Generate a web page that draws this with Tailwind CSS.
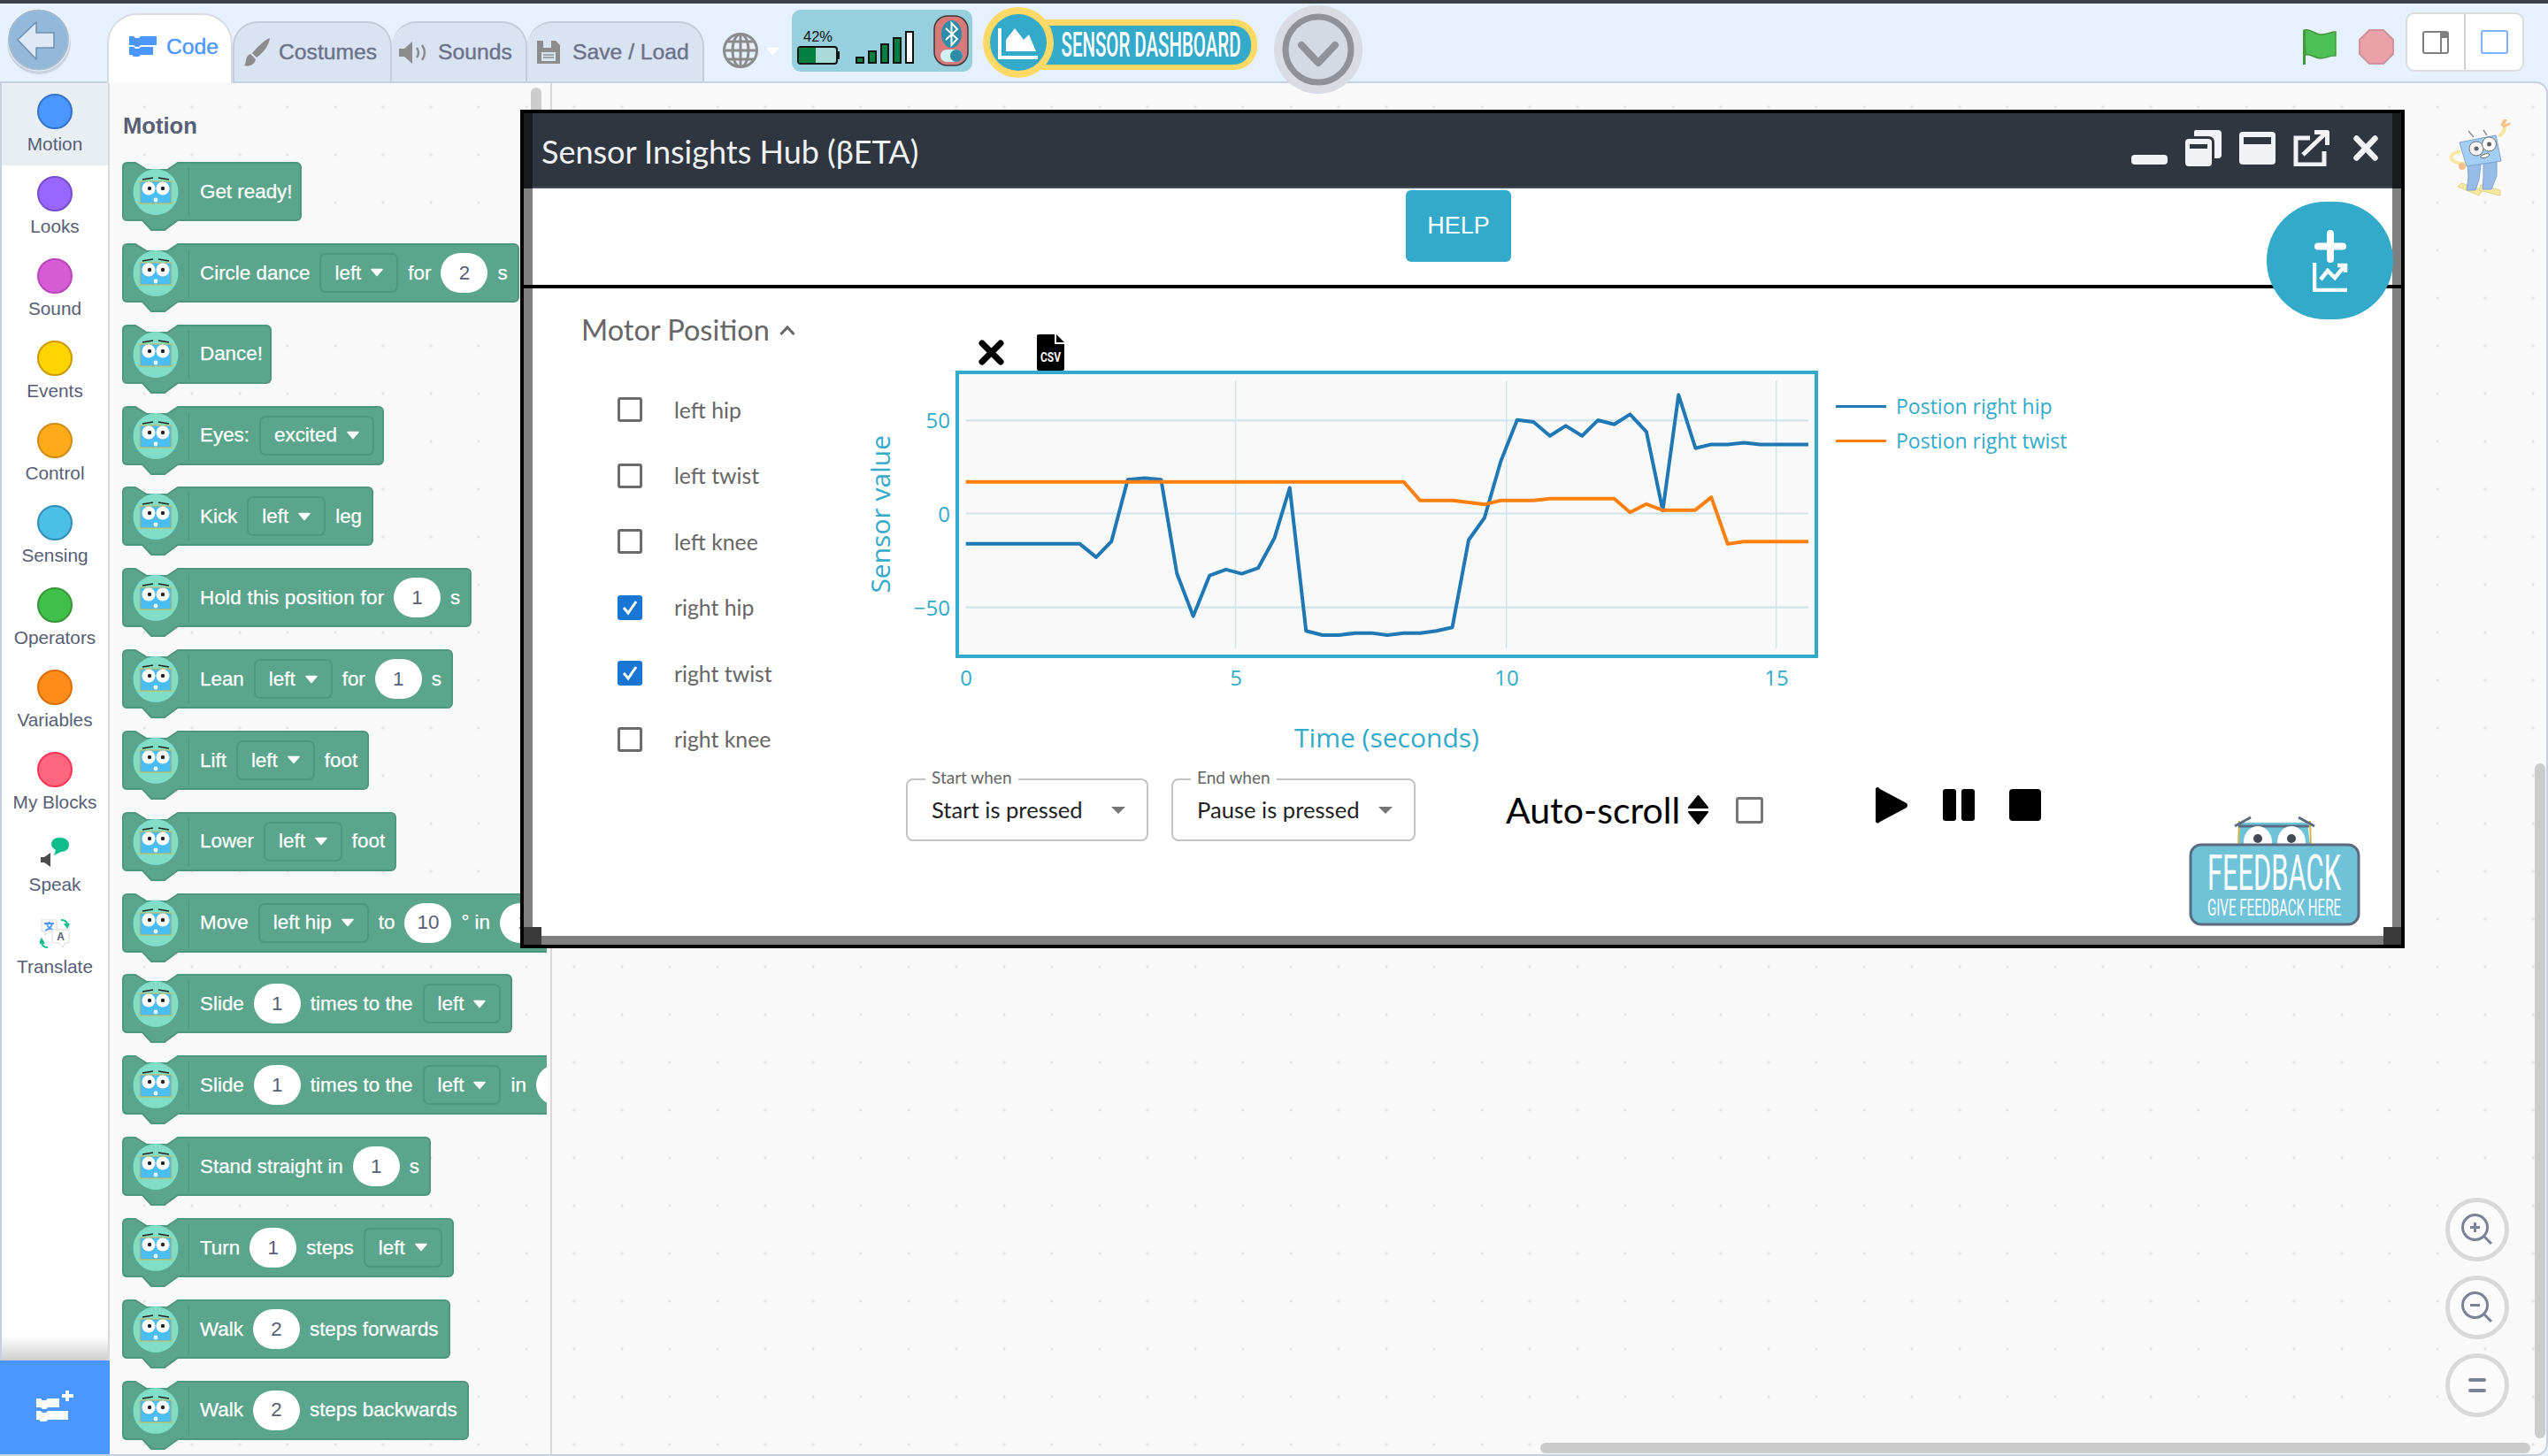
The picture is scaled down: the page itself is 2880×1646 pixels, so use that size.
<!DOCTYPE html>
<html lang="en">
<head>
<meta charset="UTF-8">
<title>Sensor Insights Hub</title>
<script src="https://cdn.jsdelivr.net/npm/@tailwindcss/browser@4"></script>
</head>
<body class="bg-[#e6f0ff]">
<!-- shared block head: notch, bump and robot face -->
<svg class="hidden">
  <symbol id="block-head" viewBox="0 0 76 78">
    <path d="M76 1H63L51 9H28L15 1H6Q1 1 1 6V61Q1 66 6 66H23L33 77H48L63 66H76" fill="#5ba58c" stroke="#4e9680" stroke-width="2"/>
    <path d="M75.5 7V62" stroke="#4f9580" stroke-width="1.5"/>
    <ellipse cx="38" cy="34" rx="25.5" ry="26" fill="#7fdec5"/>
    <rect x="20" y="22" width="36" height="25" fill="#4cbdf0" stroke="#d9b84a" stroke-width="1"/>
    <circle cx="30" cy="30" r="7.5" fill="#fff"/>
    <circle cx="46" cy="30" r="7.5" fill="#fff"/>
    <circle cx="31" cy="30" r="2.2" fill="#222"/>
    <circle cx="46" cy="30" r="2.2" fill="#222"/>
    <path d="M23 20L35 18M41 18L53 20" stroke="#222" stroke-width="1.6"/>
    <circle cx="38" cy="43" r="2.4" fill="#fff"/>
  </symbol>
  <symbol id="caret" viewBox="0 0 14 10"><path d="M1 1.5H13L7 8.5Z" fill="#fff" stroke="#fff" stroke-linejoin="round" stroke-width="1.5"/></symbol>
</svg>

<div class="relative w-[2880px] h-[1646px] overflow-hidden flex flex-col bg-[#e6f0ff] font-['Liberation_Sans',Arial,sans-serif]">
  <div class="h-[4px] bg-[#3d4147] shrink-0"></div>

  <!-- top menu -->
  <header class="relative z-20 flex h-[88px] shrink-0">
    <svg class="ml-[8px] mt-[5px] w-[73px] h-[76px] shrink-0" viewBox="0 0 73 76">
      <circle cx="36" cy="39" r="36" fill="#c9d2de"/>
      <circle cx="35.500" cy="36" r="35.500" fill="#fff" fill-opacity=".7"/>
      <circle cx="35.500" cy="36" r="33.500" fill="#93b8da" stroke="#a4bcd2" stroke-width="2"/>
      <path d="M12 36L33 16V28H53V45H33V58Z" fill="#dfe9f6" stroke="#6d8fb0" stroke-width="1.500" stroke-linejoin="round"/>
    </svg>

    <nav class="ml-[40px] flex items-end self-end text-[24.7px] [-webkit-text-stroke:0.4px] whitespace-nowrap text-[#6b7288]">
      <div class="relative z-10 -mb-[2px] flex items-center gap-[11px] w-[142px] h-[79px] pl-[23px] pb-[6px] bg-white text-[#4c97ff] border-x-2 border-t-2 border-[#d9dbe0] rounded-t-[34px]">
        <svg class="w-[31px] h-[23px] shrink-0" viewBox="0 0 31 23" fill="#4c97ff"><path d="M0 0H5L7 2H11L13 0H31V10H13L11 12H7L5 10H0Z"/><path d="M0 12H5L7 14H11L13 12H27V21H13L11 23H5L3 21H0Z"/></svg>
        <span>Code</span>
      </div>
      <div class="flex items-center gap-[10px] w-[180px] h-[68px] pl-[10px] bg-[#d9e3f2] border-x-2 border-t-2 border-[#c4ccda] rounded-t-[28px]">
        <svg class="w-[30px] h-[32px] shrink-0" viewBox="0 0 30 32" fill="#8c8c8c"><path d="M30 0C29 9 22 17 15 22L10 17C15 11 23 3 30 0Z"/><path d="M8 18L14 24C13 30 6 33 1 31C4 29 1 21 8 18Z"/></svg>
        <span>Costumes</span>
      </div>
      <div class="flex items-center gap-[12px] w-[153px] h-[68px] pl-[8px] bg-[#d9e3f2] border-r-2 border-t-2 border-[#c4ccda] rounded-t-[28px]">
        <svg class="w-[32px] h-[25px] shrink-0" viewBox="0 0 32 25" fill="#8c8c8c"><path d="M0 8H6L15 0V25L6 17H0Z"/><path d="M20 7Q24 12.500 20 18M26 4Q32 12.500 26 21" fill="none" stroke="#8c8c8c" stroke-width="2.500"/></svg>
        <span>Sounds</span>
      </div>
      <div class="flex items-center gap-[14px] w-[200px] h-[68px] pl-[11px] bg-[#d9e3f2] border-r-2 border-t-2 border-[#c4ccda] rounded-t-[28px]">
        <svg class="w-[26px] h-[26px] shrink-0" viewBox="0 0 26 26"><path d="M0 0H21L26 5V26H0Z" fill="#8c8c8c"/><rect x="7" y="0" width="9" height="8" fill="#d9e3f2"/><rect x="5" y="13" width="16" height="10" fill="#d9e3f2"/><path d="M7 16H19M7 19H19" stroke="#8c8c8c" stroke-width="1.500"/></svg>
        <span>Save / Load</span>
      </div>
    </nav>

    <svg class="ml-[21px] mt-[33px] w-[40px] h-[40px] shrink-0" viewBox="0 0 40 40" fill="none" stroke="#8c8c8c" stroke-width="3"><circle cx="20" cy="20" r="18.500"/><ellipse cx="20" cy="20" rx="9" ry="18.500"/><path d="M20 1V39M2 20H38M5 10H35M5 30H35"/></svg>
    <svg class="ml-[8px] mt-[49px] w-[17px] h-[10px] shrink-0"><use href="#caret"/></svg>

    <!-- robot status -->
    <svg class="ml-[13px] mt-[7px] w-[204px] h-[70px] shrink-0" viewBox="0 0 204 70">
      <rect width="204" height="70" rx="10" fill="#96cfdd"/>
      <text x="13" y="35.500" textLength="33" lengthAdjust="spacingAndGlyphs" font-size="17" fill="#111" font-family="Liberation Sans">42%</text>
      <rect x="7" y="42" width="44" height="19" rx="3" fill="#a9dbd8" stroke="#111" stroke-width="2"/>
      <rect x="8" y="43" width="19" height="17" fill="#008040"/>
      <rect x="51" y="47" width="3" height="9" fill="#111"/>
      <g stroke="#111" stroke-width="2" fill="#008040">
        <rect x="73" y="54" width="8" height="6"/><rect x="87" y="47" width="8" height="13"/><rect x="101" y="39" width="8" height="21"/><rect x="115" y="32" width="8" height="28"/><rect x="129" y="25" width="8" height="35" fill="#fff"/>
      </g>
      <rect x="161" y="7" width="38" height="56" rx="15" fill="#d97a7a" stroke="#3a3a3a" stroke-width="1.500"/>
      <ellipse cx="180.500" cy="27.500" rx="11.500" ry="15.500" fill="#2e8ca8"/>
      <path d="M174 21L187 33L180.500 40V15L187 22L174 34" fill="none" stroke="#fff" stroke-width="2"/>
      <rect x="168" y="45" width="25" height="14" rx="7" fill="#d0f0f0"/>
      <circle cx="186" cy="52" r="7" fill="#2e8ca8"/>
    </svg>

    <!-- sensor dashboard button -->
    <svg class="ml-[12px] mt-[4px] w-[310px] h-[80px] shrink-0" viewBox="0 0 310 80">
      <rect x="30" y="14" width="280" height="57" rx="26" fill="#ffd966"/>
      <rect x="40" y="21" width="263" height="44" rx="20" fill="#33aaca"/>
      <circle cx="40" cy="40" r="40" fill="#ffd966"/>
      <ellipse cx="40" cy="40" rx="32" ry="32" fill="#33aaca"/>
      <path d="M19 24V57H62" fill="none" stroke="#fff" stroke-width="4"/>
      <path d="M26 50V37L36 24L46 37L52 31L60 50Z" fill="#fff"/>
      <text x="88.500" y="56" textLength="203" lengthAdjust="spacingAndGlyphs" font-size="38" font-weight="500" fill="#fff" font-family="Roboto">SENSOR DASHBOARD</text>
    </svg>

    <svg class="ml-[19px] mt-[2px] w-[100px] h-[100px] shrink-0" viewBox="0 0 100 100">
      <circle cx="50" cy="50" r="50" fill="#d9dce3"/>
      <circle cx="50" cy="50" r="37" fill="#d5d9e2" stroke="#8f9299" stroke-width="7"/>
      <path d="M31 45L50 65L69 45" fill="none" stroke="#8f9299" stroke-width="8" stroke-linecap="round" stroke-linejoin="round"/>
    </svg>

    <div class="ml-auto mr-[27px] flex items-start">
      <svg class="mt-[29px] w-[38px] h-[40px]" viewBox="0 0 38 40"><path d="M1.500 1C9 -1 13 6 20 6C27 6 31 3 37 3V30C30 29 27 33 20 33C13 33 8 27 3 29Z" fill="#4cbf56" stroke="#45993d" stroke-width="1.500"/><path d="M1.500 1V40" stroke="#45993d" stroke-width="3"/></svg>
      <svg class="ml-[25px] mt-[29px] w-[40px] h-[40px]" viewBox="0 0 40 40"><path d="M12 1H28L39 12V28L28 39H12L1 28V12Z" fill="#eaa1a8" stroke="#cf949b" stroke-width="2"/></svg>
      <div class="ml-[13px] mt-[10px] flex w-[134px] h-[67px] bg-white border-2 border-[#dcdcdc] rounded-[10px]">
        <div class="flex items-center justify-center w-[66px] border-r-2 border-[#d0d0d0]">
          <svg class="w-[30px] h-[26px]" viewBox="0 0 30 26"><rect x="1" y="1" width="28" height="24" rx="2" fill="#fff" stroke="#7f7f7f" stroke-width="2"/><path d="M20 1H29V8H20Z" fill="#7f7f7f"/><rect x="20" y="8" width="2" height="17" fill="#7f7f7f"/></svg>
        </div>
        <div class="flex flex-1 items-center justify-center">
          <div class="w-[31px] h-[27px] rounded-[3px] border-2 border-[#7fb2ff]"></div>
        </div>
      </div>
    </div>
  </header>

  <!-- main work area -->
  <main class="relative flex flex-1 min-h-0 overflow-hidden rounded-r-[14px] border-y-2 border-r-2 border-[#c5d0e0] bg-[#f9f9f9] bg-[radial-gradient(circle,#e2e2e2_1.3px,transparent_1.8px)] bg-[length:54px_54px] bg-[position:-26px_0px]">

    <!-- category menu -->
    <aside class="relative flex flex-col w-[124px] shrink-0 bg-white border-x-2 border-l-[#c5d0e0] border-r-[#d9d9d9] text-[20.8px] text-[#575e75] whitespace-nowrap">
      <div class="flex flex-col items-center h-[93px] pt-[12px] bg-[#e9eef2]"><span class="w-[40px] h-[40px] rounded-full bg-[#4c97ff] border-2 border-[#3373cc]"></span><span class="mt-[1px]">Motion</span></div>
      <div class="flex flex-col items-center h-[93px] pt-[12px]"><span class="w-[40px] h-[40px] rounded-full bg-[#9966ff] border-2 border-[#774dcb]"></span><span class="mt-[1px]">Looks</span></div>
      <div class="flex flex-col items-center h-[93px] pt-[12px]"><span class="w-[40px] h-[40px] rounded-full bg-[#d65cd6] border-2 border-[#bd42bd]"></span><span class="mt-[1px]">Sound</span></div>
      <div class="flex flex-col items-center h-[93px] pt-[12px]"><span class="w-[40px] h-[40px] rounded-full bg-[#ffd500] border-2 border-[#cc9900]"></span><span class="mt-[1px]">Events</span></div>
      <div class="flex flex-col items-center h-[93px] pt-[12px]"><span class="w-[40px] h-[40px] rounded-full bg-[#ffab19] border-2 border-[#cf8b17]"></span><span class="mt-[1px]">Control</span></div>
      <div class="flex flex-col items-center h-[93px] pt-[12px]"><span class="w-[40px] h-[40px] rounded-full bg-[#4cbfe6] border-2 border-[#2e8eb8]"></span><span class="mt-[1px]">Sensing</span></div>
      <div class="flex flex-col items-center h-[93px] pt-[12px]"><span class="w-[40px] h-[40px] rounded-full bg-[#40bf4a] border-2 border-[#389438]"></span><span class="mt-[1px]">Operators</span></div>
      <div class="flex flex-col items-center h-[93px] pt-[12px]"><span class="w-[40px] h-[40px] rounded-full bg-[#ff8c1a] border-2 border-[#db6e00]"></span><span class="mt-[1px]">Variables</span></div>
      <div class="flex flex-col items-center h-[93px] pt-[12px]"><span class="w-[40px] h-[40px] rounded-full bg-[#ff6680] border-2 border-[#ff3355]"></span><span class="mt-[1px]">My Blocks</span></div>
      <div class="flex flex-col items-center h-[93px] pt-[16px]">
        <svg class="w-[34px] h-[33px]" viewBox="0 0 34 33"><path d="M1 22H5L12 17V33L5 28H1Z" fill="#4d4d4d"/><path d="M22 0C29 0 33 3 33 8C33 13 29 16 24 16L16 20L18 14C15 12 13 10 13 8C13 3 16 0 22 0Z" fill="#0fbd8c"/></svg>
        <span class="mt-[4px]">Speak</span>
      </div>
      <div class="flex flex-col items-center h-[93px] pt-[15px]">
        <svg class="w-[34px] h-[34px]" viewBox="0 0 34 34"><path d="M2 0H19V14H10L6 18V14H2Z" fill="#fff" stroke="#d9d9d9"/><path d="M5 5H16M10.500 3V5M14 5C13 10 9 12 6 13M8 6C9 9 12 11 15 12" fill="none" stroke="#4c97ff" stroke-width="1.800"/><path d="M14 12H33V27H28L26 32L22 27H14Z" fill="#fff" stroke="#d9d9d9"/><text x="23.500" y="24" text-anchor="middle" font-size="12" font-weight="700" fill="#575e75" font-family="Liberation Sans">A</text><path d="M24 1C29 1 31 3 31 7M28 5L31 9L33 5M2 25C2 30 5 32 9 32M5 28L2 23L0 28" fill="none" stroke="#0fbd8c" stroke-width="2"/></svg>
        <span class="mt-[4px]">Translate</span>
      </div>
      <div class="absolute left-0 right-0 bottom-[106px] h-[28px] bg-linear-to-b from-white to-[#cfcfcf]"></div>
      <div class="absolute -left-[2px] -right-[2px] -bottom-[2px] h-[108px] flex items-center justify-center bg-[#4c97ff]">
        <svg class="w-[44px] h-[36px] -mt-[4px]" viewBox="0 0 44 36" fill="#fff"><path d="M1 9H6L8 11H12L14 9H27V19H14L12 21H8L6 19H1Z"/><path d="M1 23H6L8 25H12L14 23H37V33H14L12 35H6L4 33H1Z"/><path d="M34 0H38V4H43V8H38V12H34V8H30V4H34Z"/></svg>
      </div>
    </aside>

    <!-- block palette -->
    <section class="relative w-[500px] shrink-0 border-r-2 border-[#d9d9d9]">
      <div class="w-[494px] h-full overflow-hidden pl-[14px] pt-[33px] text-[22.4px] [-webkit-text-stroke:0.25px] text-white whitespace-nowrap">
        <h2 class="h-[30px] mb-[26px] pl-[1px] text-[25.600px] leading-[30px] font-bold text-[#575e75] [-webkit-text-stroke:0px]">Motion</h2>
        <div class="flex flex-col gap-[13.850px]">
          <div class="flex w-fit h-[78px]"><svg class="w-[76px] h-[78px] shrink-0"><use href="#block-head"/></svg><div class="flex items-center gap-[11px] h-[67px] pl-[12px] pr-[8px] bg-[#5ba58c] border-y-2 border-r-2 border-[#4e9680] rounded-r-[6px]"><span>Get ready!</span></div></div>
          <div class="flex w-fit h-[78px]"><svg class="w-[76px] h-[78px] shrink-0"><use href="#block-head"/></svg><div class="flex items-center gap-[11px] h-[67px] pl-[12px] pr-[11px] bg-[#5ba58c] border-y-2 border-r-2 border-[#4e9680] rounded-r-[6px]"><span>Circle dance</span><span class="flex items-center gap-[11px] h-[45px] px-[15px] border-2 border-[#4e9680] rounded-[7px]">left<svg class="w-[14px] h-[10px]"><use href="#caret"/></svg></span><span>for</span><span class="flex items-center justify-center w-[53px] h-[45px] rounded-full bg-white text-[#575e75] [-webkit-text-stroke:0px]">2</span><span>s</span></div></div>
          <div class="flex w-fit h-[78px]"><svg class="w-[76px] h-[78px] shrink-0"><use href="#block-head"/></svg><div class="flex items-center gap-[11px] h-[67px] pl-[12px] pr-[8px] bg-[#5ba58c] border-y-2 border-r-2 border-[#4e9680] rounded-r-[6px]"><span>Dance!</span></div></div>
          <div class="flex w-fit h-[78px]"><svg class="w-[76px] h-[78px] shrink-0"><use href="#block-head"/></svg><div class="flex items-center gap-[11px] h-[67px] pl-[12px] pr-[9px] bg-[#5ba58c] border-y-2 border-r-2 border-[#4e9680] rounded-r-[6px]"><span>Eyes:</span><span class="flex items-center gap-[11px] h-[45px] px-[15px] border-2 border-[#4e9680] rounded-[7px]">excited<svg class="w-[14px] h-[10px]"><use href="#caret"/></svg></span></div></div>
          <div class="flex w-fit h-[78px]"><svg class="w-[76px] h-[78px] shrink-0"><use href="#block-head"/></svg><div class="flex items-center gap-[11px] h-[67px] pl-[12px] pr-[11px] bg-[#5ba58c] border-y-2 border-r-2 border-[#4e9680] rounded-r-[6px]"><span>Kick</span><span class="flex items-center gap-[11px] h-[45px] px-[15px] border-2 border-[#4e9680] rounded-[7px]">left<svg class="w-[14px] h-[10px]"><use href="#caret"/></svg></span><span>leg</span></div></div>
          <div class="flex w-fit h-[78px]"><svg class="w-[76px] h-[78px] shrink-0"><use href="#block-head"/></svg><div class="flex items-center gap-[11px] h-[67px] pl-[12px] pr-[11px] bg-[#5ba58c] border-y-2 border-r-2 border-[#4e9680] rounded-r-[6px]"><span class="w-[208px] tracking-[0.25px]">Hold this position for</span><span class="flex items-center justify-center w-[53px] h-[45px] rounded-full bg-white text-[#575e75] [-webkit-text-stroke:0px]">1</span><span>s</span></div></div>
          <div class="flex w-fit h-[78px]"><svg class="w-[76px] h-[78px] shrink-0"><use href="#block-head"/></svg><div class="flex items-center gap-[11px] h-[67px] pl-[12px] pr-[11px] bg-[#5ba58c] border-y-2 border-r-2 border-[#4e9680] rounded-r-[6px]"><span>Lean</span><span class="flex items-center gap-[11px] h-[45px] px-[15px] border-2 border-[#4e9680] rounded-[7px]">left<svg class="w-[14px] h-[10px]"><use href="#caret"/></svg></span><span>for</span><span class="flex items-center justify-center w-[53px] h-[45px] rounded-full bg-white text-[#575e75] [-webkit-text-stroke:0px]">1</span><span>s</span></div></div>
          <div class="flex w-fit h-[78px]"><svg class="w-[76px] h-[78px] shrink-0"><use href="#block-head"/></svg><div class="flex items-center gap-[11px] h-[67px] pl-[12px] pr-[11px] bg-[#5ba58c] border-y-2 border-r-2 border-[#4e9680] rounded-r-[6px]"><span>Lift</span><span class="flex items-center gap-[11px] h-[45px] px-[15px] border-2 border-[#4e9680] rounded-[7px]">left<svg class="w-[14px] h-[10px]"><use href="#caret"/></svg></span><span>foot</span></div></div>
          <div class="flex w-fit h-[78px]"><svg class="w-[76px] h-[78px] shrink-0"><use href="#block-head"/></svg><div class="flex items-center gap-[11px] h-[67px] pl-[12px] pr-[11px] bg-[#5ba58c] border-y-2 border-r-2 border-[#4e9680] rounded-r-[6px]"><span>Lower</span><span class="flex items-center gap-[11px] h-[45px] px-[15px] border-2 border-[#4e9680] rounded-[7px]">left<svg class="w-[14px] h-[10px]"><use href="#caret"/></svg></span><span>foot</span></div></div>
          <div class="flex w-fit h-[78px]"><svg class="w-[76px] h-[78px] shrink-0"><use href="#block-head"/></svg><div class="flex items-center gap-[11px] h-[67px] pl-[12px] pr-[11px] bg-[#5ba58c] border-y-2 border-r-2 border-[#4e9680] rounded-r-[6px]"><span>Move</span><span class="flex items-center gap-[11px] h-[45px] px-[15px] border-2 border-[#4e9680] rounded-[7px]">left hip<svg class="w-[14px] h-[10px]"><use href="#caret"/></svg></span><span>to</span><span class="flex items-center justify-center w-[53px] h-[45px] rounded-full bg-white text-[#575e75] [-webkit-text-stroke:0px]">10</span><span>° in</span><span class="flex items-center justify-center w-[53px] h-[45px] rounded-full bg-white text-[#575e75] [-webkit-text-stroke:0px]">1</span><span>s</span></div></div>
          <div class="flex w-fit h-[78px]"><svg class="w-[76px] h-[78px] shrink-0"><use href="#block-head"/></svg><div class="flex items-center gap-[11px] h-[67px] pl-[12px] pr-[11px] bg-[#5ba58c] border-y-2 border-r-2 border-[#4e9680] rounded-r-[6px]"><span>Slide</span><span class="flex items-center justify-center w-[53px] h-[45px] rounded-full bg-white text-[#575e75] [-webkit-text-stroke:0px]">1</span><span>times to the</span><span class="flex items-center gap-[11px] h-[45px] px-[15px] border-2 border-[#4e9680] rounded-[7px]">left<svg class="w-[14px] h-[10px]"><use href="#caret"/></svg></span></div></div>
          <div class="flex w-fit h-[78px]"><svg class="w-[76px] h-[78px] shrink-0"><use href="#block-head"/></svg><div class="flex items-center gap-[11px] h-[67px] pl-[12px] pr-[11px] bg-[#5ba58c] border-y-2 border-r-2 border-[#4e9680] rounded-r-[6px]"><span>Slide</span><span class="flex items-center justify-center w-[53px] h-[45px] rounded-full bg-white text-[#575e75] [-webkit-text-stroke:0px]">1</span><span>times to the</span><span class="flex items-center gap-[11px] h-[45px] px-[15px] border-2 border-[#4e9680] rounded-[7px]">left<svg class="w-[14px] h-[10px]"><use href="#caret"/></svg></span><span>in</span><span class="flex items-center justify-center w-[53px] h-[45px] rounded-full bg-white text-[#575e75] [-webkit-text-stroke:0px]">1</span><span>s</span></div></div>
          <div class="flex w-fit h-[78px]"><svg class="w-[76px] h-[78px] shrink-0"><use href="#block-head"/></svg><div class="flex items-center gap-[11px] h-[67px] pl-[12px] pr-[11px] bg-[#5ba58c] border-y-2 border-r-2 border-[#4e9680] rounded-r-[6px]"><span>Stand straight in</span><span class="flex items-center justify-center w-[53px] h-[45px] rounded-full bg-white text-[#575e75] [-webkit-text-stroke:0px]">1</span><span>s</span></div></div>
          <div class="flex w-fit h-[78px]"><svg class="w-[76px] h-[78px] shrink-0"><use href="#block-head"/></svg><div class="flex items-center gap-[11px] h-[67px] pl-[12px] pr-[11px] bg-[#5ba58c] border-y-2 border-r-2 border-[#4e9680] rounded-r-[6px]"><span>Turn</span><span class="flex items-center justify-center w-[53px] h-[45px] rounded-full bg-white text-[#575e75] [-webkit-text-stroke:0px]">1</span><span>steps</span><span class="flex items-center gap-[11px] h-[45px] px-[15px] border-2 border-[#4e9680] rounded-[7px]">left<svg class="w-[14px] h-[10px]"><use href="#caret"/></svg></span></div></div>
          <div class="flex w-fit h-[78px]"><svg class="w-[76px] h-[78px] shrink-0"><use href="#block-head"/></svg><div class="flex items-center gap-[11px] h-[67px] pl-[12px] pr-[11px] bg-[#5ba58c] border-y-2 border-r-2 border-[#4e9680] rounded-r-[6px]"><span>Walk</span><span class="flex items-center justify-center w-[53px] h-[45px] rounded-full bg-white text-[#575e75] [-webkit-text-stroke:0px]">2</span><span>steps forwards</span></div></div>
          <div class="flex w-fit h-[78px]"><svg class="w-[76px] h-[78px] shrink-0"><use href="#block-head"/></svg><div class="flex items-center gap-[11px] h-[67px] pl-[12px] pr-[11px] bg-[#5ba58c] border-y-2 border-r-2 border-[#4e9680] rounded-r-[6px]"><span>Walk</span><span class="flex items-center justify-center w-[53px] h-[45px] rounded-full bg-white text-[#575e75] [-webkit-text-stroke:0px]">2</span><span>steps backwards</span></div></div>
        </div>
      </div>
      <div class="absolute left-[476px] top-[5px] w-[12px] h-[60px] rounded-full bg-[#cccccc]"></div>
    </section>

    <!-- workspace -->
    <section class="relative flex-1">
      <!-- sprite -->
      <svg class="absolute left-[2144px] top-[41px] w-[70px] h-[92px] opacity-70" viewBox="0 0 70 92">
        <path d="M58 18C63 14 64 8 62 2" fill="none" stroke="#f6e27a" stroke-width="4" stroke-linecap="round"/>
        <path d="M60 6L64 1M62 8L68 5" stroke="#f5a862" stroke-width="3" stroke-linecap="round"/>
        <path d="M13 36C4 38 0 42 4 46C8 49 14 50 18 50" fill="none" stroke="#f6e27a" stroke-width="4"/>
        <circle cx="15" cy="53" r="4" fill="#f5a862"/>
        <path d="M10 76L34 86L38 80L14 72Z" fill="#f6e27a" stroke="#d9c45c"/>
        <path d="M34 80L58 86L58 80L36 74Z" fill="#f6e27a" stroke="#d9c45c"/>
        <path d="M21 52L36 51L34 68L30 80H20L22 66Z" fill="#6fa3e0" stroke="#4d7fc0"/>
        <path d="M39 50L54 48L54 64L48 79H38L39 66Z" fill="#6fa3e0" stroke="#4d7fc0"/>
        <path d="M12 26L53 18L59 47L20 53Z" fill="#7fbdf2" stroke="#4d7fc0"/>
        <path d="M28 20L22 13M43 18L39 12" stroke="#666" stroke-width="1.500"/>
        <circle cx="31" cy="33" r="8" fill="#fff" stroke="#333"/>
        <circle cx="45.500" cy="28" r="8" fill="#fff" stroke="#333"/>
        <circle cx="31" cy="33" r="2.500" fill="#222"/>
        <circle cx="45.500" cy="28" r="2.500" fill="#222"/>
        <path d="M36 43Q42 45 46 40L44 38L36 41Z" fill="#fff" stroke="#333"/>
      </svg>

      <div class="absolute right-[1px] top-[769px] bottom-[18px] w-[12px] rounded-full bg-[#cccccc]"></div>
      <div class="absolute left-[1117px] right-[18px] bottom-[1px] h-[12px] rounded-full bg-[#cccccc]"></div>

      <div class="absolute left-[2140px] top-[1260px] flex flex-col gap-[16px]">
        <button class="flex items-center justify-center w-[72px] h-[72px] rounded-full bg-[#fbfbfb] border-[5px] border-[#d9d9d9]">
          <svg class="w-[36px] h-[36px]" viewBox="0 0 36 36" fill="none" stroke="#7b8296" stroke-width="3"><circle cx="15.500" cy="15.500" r="14"/><path d="M26 26L34 34M15.500 10V21M10 15.500H21"/></svg>
        </button>
        <button class="flex items-center justify-center w-[72px] h-[72px] rounded-full bg-[#fbfbfb] border-[5px] border-[#d9d9d9]">
          <svg class="w-[36px] h-[36px]" viewBox="0 0 36 36" fill="none" stroke="#7b8296" stroke-width="3"><circle cx="15.500" cy="15.500" r="14"/><path d="M26 26L34 34M10 15.500H21"/></svg>
        </button>
        <button class="flex items-center justify-center w-[72px] h-[72px] rounded-full bg-[#fbfbfb] border-[5px] border-[#d9d9d9]">
          <svg class="w-[22px] h-[18px]" viewBox="0 0 22 18" fill="#7b8296"><rect width="20" height="4" x="1" y="1" rx="2"/><rect width="20" height="4" x="1" y="13" rx="2"/></svg>
        </button>
      </div>
    </section>
  </main>

  <!-- floating sensor window -->
  <div class="absolute z-30 left-[588px] top-[124px] w-[2130px] h-[948px] flex flex-col border-4 border-black bg-white font-['Lato',sans-serif]">
    <div class="flex items-center h-[85px] shrink-0 border-x-[10px] border-[#191b1f] bg-[#2f3640] shadow-[inset_0_-2px_0_#434a55] pl-[10px] text-[#f0f2f5]">
      <h1 class="text-[36px] leading-none">Sensor Insights Hub (βETA)</h1>
      <div class="ml-auto flex items-start mr-[16px] h-[41px] -mt-[6px]">
        <svg class="mt-[28px] w-[41px] h-[11px]" viewBox="0 0 41 11"><rect width="41" height="11" rx="4" fill="#f0f2f5"/></svg>
        <svg class="ml-[20px] w-[41px] h-[41px]" viewBox="0 0 41 41"><path d="M12 0H37Q41 0 41 4V28Q41 32 37 32H33V14Q33 7 26 7H10V2Q10 0 12 0Z" fill="#f0f2f5"/><rect y="10" width="30" height="31" rx="4" fill="#f0f2f5"/><rect x="5" y="16" width="20" height="5" fill="#2f3640"/></svg>
        <svg class="ml-[20px] mt-[2px] w-[41px] h-[37px]" viewBox="0 0 41 37"><rect width="41" height="37" rx="4" fill="#f0f2f5"/><rect x="5" y="6" width="31" height="8" fill="#2f3640"/></svg>
        <svg class="ml-[20px] w-[41px] h-[41px]" viewBox="0 0 41 41" fill="none" stroke="#f0f2f5" stroke-width="5"><path d="M19 9H3V39H35V24"/><path d="M11 28L36 4M24 2.500H38.500V17" stroke-linejoin="round"/></svg>
        <svg class="ml-[27px] mt-[6px] w-[28px] h-[29px]" viewBox="0 0 28 29" stroke="#f0f2f5" stroke-width="6.500" stroke-linecap="round"><path d="M3.500 3.500L24.500 25.500M24.500 3.500L3.500 25.500"/></svg>
      </div>
    </div>

    <div class="flex-1 min-h-0 flex flex-col border-x-[10px] border-b-[10px] border-[#808080]">
      <div class="flex justify-center h-[109px] shrink-0 pt-[2px] pr-[9px]">
        <button class="w-[119px] h-[81px] rounded-[6px] bg-[#33aaca] text-white text-[27px] font-['Liberation_Sans',sans-serif]">HELP</button>
      </div>
      <div class="h-[4px] shrink-0 -mx-[10px] bg-black"></div>

      <div class="flex flex-1 min-h-0">
        <!-- motor checklist -->
        <div class="w-[380px] shrink-0 pl-[55px] pt-[27px] text-[#666666]">
          <div class="flex items-center h-[40px] gap-[11px] text-[32.500px]">
            <span>Motor Position</span>
            <svg class="w-[18px] h-[11px]" viewBox="0 0 18 11" fill="none" stroke="#666" stroke-width="3"><path d="M1.500 10L9 2L16.500 10"/></svg>
          </div>
          <div class="mt-[33px] ml-[41px] flex flex-col text-[24.800px]">
            <label class="flex items-center gap-[36px] h-[74.500px]"><span class="w-[28px] h-[28px] rounded-[3px] border-[3.500px] border-[#6b6b6b]"></span>left hip</label>
            <label class="flex items-center gap-[36px] h-[74.500px]"><span class="w-[28px] h-[28px] rounded-[3px] border-[3.500px] border-[#6b6b6b]"></span>left twist</label>
            <label class="flex items-center gap-[36px] h-[74.500px]"><span class="w-[28px] h-[28px] rounded-[3px] border-[3.500px] border-[#6b6b6b]"></span>left knee</label>
            <label class="flex items-center gap-[36px] h-[74.500px]"><span class="flex items-center justify-center w-[28px] h-[28px] rounded-[3px] bg-[#1976d2]"><svg class="w-[20px] h-[18px]" viewBox="0 0 20 18" fill="none" stroke="#fff" stroke-width="3"><path d="M3 9L8 15L17 2"/></svg></span>right hip</label>
            <label class="flex items-center gap-[36px] h-[74.500px]"><span class="flex items-center justify-center w-[28px] h-[28px] rounded-[3px] bg-[#1976d2]"><svg class="w-[20px] h-[18px]" viewBox="0 0 20 18" fill="none" stroke="#fff" stroke-width="3"><path d="M3 9L8 15L17 2"/></svg></span>right twist</label>
            <label class="flex items-center gap-[36px] h-[74.500px]"><span class="w-[28px] h-[28px] rounded-[3px] border-[3.500px] border-[#6b6b6b]"></span>right knee</label>
          </div>
        </div>

        <!-- chart and controls -->
        <div class="flex-1 min-w-0 pt-[51px]">
          <div class="flex items-end h-[42px] pl-[124px]">
            <svg class="mb-[6px] w-[29px] h-[29px]" viewBox="0 0 29 29" stroke="#000" stroke-width="7" stroke-linecap="round"><path d="M4 4L25 25M25 4L4 25"/></svg>
            <svg class="ml-[37px] w-[31px] h-[41px]" viewBox="0 0 31 41"><path d="M2 0H20V11H31V39Q31 41 29 41H2Q0 41 0 39V2Q0 0 2 0Z" fill="#000"/><path d="M22 0L31 9H22Z" fill="#000"/><text x="15.500" y="31" text-anchor="middle" textLength="23" lengthAdjust="spacingAndGlyphs" font-size="14" font-weight="700" fill="#fff" font-family="Roboto">CSV</text></svg>
          </div>

          <div class="flex">
            <div class="w-[98px] shrink-0 flex justify-start items-center h-[325px]">
              <span class="[writing-mode:vertical-rl] rotate-180 ml-[-7px] text-[#33aaca] text-[30px] leading-[40px] whitespace-nowrap font-['Open_Sans',sans-serif]">Sensor value</span>
            </div>
            <div class="w-[975px] shrink-0 font-['Open_Sans',sans-serif] text-[#33aaca]">
              <div class="relative h-[325px] border-4 border-[#33aaca] bg-[#f9f9f9]">
                <svg class="w-full h-full" viewBox="38 160 1516 950" preserveAspectRatio="none" fill="none">
                  <g stroke="#cfe5ec">
                    <path d="M528 182V1088M1008 182V1088M1486 182V1088" stroke-width="1.500" vector-effect="non-scaling-stroke"/>
                    <path d="M50 317H1543M50 632H1543M50 950H1543" stroke-width="2.200" vector-effect="non-scaling-stroke"/>
                  </g>
                  <polyline vector-effect="non-scaling-stroke" stroke="#1f77b4" stroke-width="4" stroke-linejoin="round" points="50,735 252,735 281,780 308,727 337,517 367,512 396,517 424,835 453,980 482,842 511,822 539,836 568,817 597,715 624,545 653,1030 682,1044 711,1044 740,1037 769,1037 797,1044 826,1037 855,1037 884,1030 912,1018 941,722 969,647 998,455 1027,315 1056,322 1085,369 1113,335 1142,369 1170,316 1199,330 1227,296 1256,355 1285,622 1313,230 1343,411 1371,398 1400,398 1429,392 1458,398 1543,398"/>
                  <polyline vector-effect="non-scaling-stroke" stroke="#ff7f0e" stroke-width="4" stroke-linejoin="round" points="50,525 826,525 855,588 913,588 970,601 998,588 1056,588 1085,582 1199,582 1227,628 1256,600 1285,621 1342,621 1371,577 1400,735 1429,727 1543,727"/>
                </svg>
                <span class="absolute right-[calc(100%+10px)] top-[52px] -translate-y-1/2 text-[24px] leading-none">50</span>
                <span class="absolute right-[calc(100%+10px)] top-[158px] -translate-y-1/2 text-[24px] leading-none">0</span>
                <span class="absolute right-[calc(100%+10px)] top-[264px] -translate-y-1/2 text-[24px] leading-none">−50</span>
                <span class="absolute left-[8px] top-[343px] -translate-x-1/2 -translate-y-1/2 text-[24px] leading-none">0</span>
                <span class="absolute left-[313px] top-[343px] -translate-x-1/2 -translate-y-1/2 text-[24px] leading-none">5</span>
                <span class="absolute left-[619px] top-[343px] -translate-x-1/2 -translate-y-1/2 text-[24px] leading-none">10</span>
                <span class="absolute left-[924px] top-[343px] -translate-x-1/2 -translate-y-1/2 text-[24px] leading-none">15</span>
              </div>
              <div class="mt-[70px] h-[40px] text-center text-[30px] leading-[40px]">Time (seconds)</div>
            </div>
            <div class="ml-[20px] mt-[21px] flex flex-col font-['Open_Sans',sans-serif] text-[23px] text-[#33aaca] whitespace-nowrap">
              <div class="flex items-center gap-[11px] h-[39px]"><span class="w-[57px] h-[3.500px] bg-[#1f77b4]"></span>Postion right hip</div>
              <div class="flex items-center gap-[11px] h-[39px]"><span class="w-[57px] h-[3.500px] bg-[#ff7f0e]"></span>Postion right twist</div>
            </div>
          </div>

          <div class="flex items-start mt-[26px] ml-[42px]">
            <div class="relative flex items-center justify-between w-[274px] h-[71px] pl-[27px] pr-[24px] border-2 border-[#c4c4c4] rounded-[8px] text-[25.600px] text-[#222]">
              <span class="absolute left-[20px] -top-[15px] px-[7px] bg-white text-[19px] leading-[24px] text-[#666]">Start when</span>
              <span>Start is pressed</span>
              <span class="w-0 h-0 border-x-[8px] border-t-[8px] border-x-transparent border-t-[#757575]"></span>
            </div>
            <div class="relative ml-[26px] flex items-center justify-between w-[276px] h-[71px] pl-[27px] pr-[24px] border-2 border-[#c4c4c4] rounded-[8px] text-[25.600px] text-[#222]">
              <span class="absolute left-[20px] -top-[15px] px-[7px] bg-white text-[19px] leading-[24px] text-[#666]">End when</span>
              <span>Pause is pressed</span>
              <span class="w-0 h-0 border-x-[8px] border-t-[8px] border-x-transparent border-t-[#757575]"></span>
            </div>
            <div class="ml-[102px] flex items-center h-[71px] text-[41px] text-black whitespace-nowrap">
              <span class="w-[196px]">Auto-scroll</span>
              <svg class="ml-[10px] w-[23px] h-[33px]" viewBox="0 0 23 33" fill="#000" stroke="#000" stroke-width="2" stroke-linejoin="round"><path d="M11.500 1L22 14H1Z"/><path d="M1 19H22L11.500 32Z"/></svg>
              <span class="ml-[31px] w-[31px] h-[30px] rounded-[3px] border-[3.500px] border-[#757575]"></span>
            </div>
            <div class="ml-[126px] mt-[10px] flex items-start">
              <svg class="w-[37px] h-[41px]" viewBox="0 0 37 41"><path d="M3 0Q5 0 6 2L36 18Q38 20.500 36 23L6 39Q3 42 1 39V3Q1 0 3 0Z" fill="#000"/></svg>
              <div class="ml-[40px] mt-[2px] flex gap-[6px]"><span class="w-[15px] h-[36px] rounded-[3px] bg-black"></span><span class="w-[15px] h-[36px] rounded-[3px] bg-black"></span></div>
              <span class="ml-[39px] mt-[2px] w-[36px] h-[36px] rounded-[4px] bg-black"></span>
            </div>
          </div>
        </div>
      </div>
    </div>

    <!-- feedback tab -->
    <svg class="absolute left-[1882px] top-[794px] w-[194px] h-[125px]" viewBox="0 0 194 125">
      <path d="M56 32L58 8H134L137 32Z" fill="#6fc3d9"/>
      <path d="M57 6L56 34M137 6L138 34" stroke="#d9b84a" stroke-width="2"/>
      <path d="M52 12L70 2M142 12L124 2" stroke="#5a6a80" stroke-width="3"/>
      <path d="M56 12H136" stroke="#5a6a80" stroke-width="3"/>
      <ellipse cx="78" cy="30" rx="16" ry="18" fill="#fff"/><ellipse cx="116" cy="30" rx="16" ry="18" fill="#fff"/>
      <circle cx="78" cy="26" r="5" fill="#444a55"/><circle cx="116" cy="26" r="5" fill="#444a55"/>
      <rect x="2" y="33" width="190" height="90" rx="12" fill="#6fc3d9" stroke="#5a6a80" stroke-width="3"/>
      <text x="21" y="84" textLength="151" lengthAdjust="spacingAndGlyphs" font-size="56" fill="#fff" font-family="Roboto">FEEDBACK</text>
      <text x="21" y="113" textLength="151" lengthAdjust="spacingAndGlyphs" font-size="26" fill="#fff" font-family="Roboto">GIVE FEEDBACK HERE</text>
    </svg>

    <!-- add chart button -->
    <div class="absolute left-[1970px] top-[100px] flex flex-col items-center justify-center w-[143px] h-[133px] rounded-full bg-[#33aaca]">
      <svg class="w-[40px] h-[70px]" viewBox="0 0 40 70" fill="none" stroke="#fff" stroke-linecap="round">
        <path d="M20 4V33M6 18.500H34" stroke-width="8"/>
        <path d="M2 37V68H39" stroke-width="4.500" stroke-linecap="butt"/>
        <path d="M9 56L17 46L25 54L36 41M28 40H37V48" stroke-width="4.500" stroke-linecap="butt"/>
      </svg>
    </div>

    <!-- resize grips -->
    <div class="absolute left-0 bottom-0 w-[20px] h-[20px] bg-[#3a3a3a]"></div>
    <div class="absolute right-0 bottom-0 w-[20px] h-[20px] bg-[#3a3a3a]"></div>
  </div>
</div>
</body>
</html>
